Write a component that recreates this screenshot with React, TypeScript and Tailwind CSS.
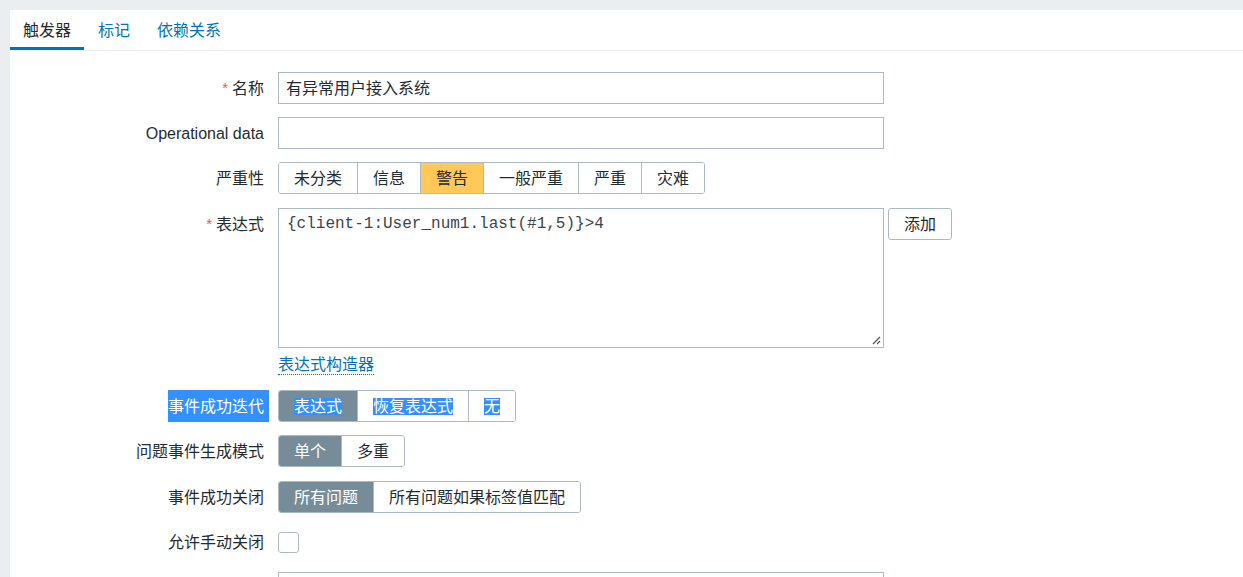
import React from "react";

const FONT = "font-['Liberation_Sans','Noto_Sans_CJK_SC',sans-serif]";

function Label({ children, req }: { children: React.ReactNode; req?: boolean }) {
  return (
    <div className="w-[254px] shrink-0 h-[32px] pt-[2px] flex items-center justify-end text-[#1f2c33]">
      {req && <span className="text-[#e45959] mr-[4px] text-[15px] leading-[16px] -mt-[2px]">*</span>}
      {children}
    </div>
  );
}

function Seg({ items, sel, warn, hl }: { items: string[]; sel?: number; warn?: number; hl?: boolean }) {
  return (
    <div className="flex h-[32px] border border-[#acbbc2] rounded-[3px] overflow-hidden">
      {items.map((t, i) => {
        const selected = i === sel;
        const isWarn = i === warn;
        return (
          <div
            key={t}
            className={`px-[15px] pt-[1px] flex items-center leading-[20px] ${i > 0 ? "border-l border-[#acbbc2]" : ""} ${
              selected ? "bg-[#768d99] text-white" : isWarn ? "bg-[#ffc859] text-[#1f2c33]" : "bg-white text-[#1f2c33]"
            }`}
          >
            {hl ? <span className="bg-[#3390ff] text-white leading-[17px]">{t}</span> : t}
          </div>
        );
      })}
    </div>
  );
}

export default function App() {
  return (
    <div className={`min-h-screen w-full bg-[#ebeef0] pl-[10px] pt-[10px] text-[16px] ${FONT}`}>
      <div className="bg-white min-h-[567px]">
        <div className="flex h-[41px] border-b border-[#ebeef0]">
          <div className="px-[13px] h-[40px] flex items-center pt-[5px] border-b-[3px] border-[#0275b8] text-[#1f2c33]">触发器</div>
          <div className="pl-[14px] pr-[13px] h-[40px] flex items-center pt-[2px] text-[#0275b8]">标记</div>
          <div className="px-[14px] h-[40px] flex items-center pt-[2px] text-[#0275b8]">依赖关系</div>
        </div>

        <div className="pt-[21px] flex flex-col">
          <div className="flex items-center">
            <Label req>名称</Label>
            <div className="ml-[14px] w-[606px] h-[32px] border border-[#acbbc2] flex items-center pl-[7px] pt-[2px] text-[#1f2c33]">
              有异常用户接入系统
            </div>
          </div>

          <div className="flex items-center mt-[13px]">
            <Label>Operational data</Label>
            <div className="ml-[14px] w-[606px] h-[32px] border border-[#acbbc2]" />
          </div>

          <div className="flex items-center mt-[13px]">
            <Label>严重性</Label>
            <div className="ml-[14px]">
              <Seg items={["未分类", "信息", "警告", "一般严重", "严重", "灾难"]} warn={2} />
            </div>
          </div>

          <div className="flex items-start mt-[14px]">
            <Label req>表达式</Label>
            <div className="ml-[14px] flex flex-col">
              <div className="relative w-[606px] h-[140px] border border-[#acbbc2] pl-[8px] pt-[5px] font-['Liberation_Mono',monospace] text-[16px] leading-[20px] text-[#3a464d] whitespace-pre">
                {"{client-1:User_num1.last(#1,5)}>4"}
                <svg className="absolute right-[2px] bottom-[2px]" width="11" height="11" viewBox="0 0 11 11">
                  <path d="M10 3 L3 10 M10 7 L7 10" stroke="#555" strokeWidth="1.2" />
                </svg>
              </div>
              <div className="flex h-[42px] pt-[7px] items-start">
                <div className="text-[#0275b8] h-[20px] leading-[20px] border-b border-dotted border-[#0275b8]">表达式构造器</div>
              </div>
            </div>
            <div className="ml-[4px] h-[32px] px-[15px] pt-[1px] border border-[#acbbc2] rounded-[3px] flex items-center text-[#1f2c33] bg-white">
              添加
            </div>
          </div>

          <div className="flex items-center">
            <div className="w-[254px] shrink-0 h-[32px] flex items-center justify-end">
              <span className="bg-[#3390ff] text-white h-[32px] pt-[2px] flex items-center pr-[5px] -mr-[5px]">事件成功迭代</span>
            </div>
            <div className="ml-[14px]">
              <Seg items={["表达式", "恢复表达式", "无"]} sel={0} hl />
            </div>
          </div>

          <div className="flex items-center mt-[13px]">
            <Label>问题事件生成模式</Label>
            <div className="ml-[14px]">
              <Seg items={["单个", "多重"]} sel={0} />
            </div>
          </div>

          <div className="flex items-center mt-[14px]">
            <Label>事件成功关闭</Label>
            <div className="ml-[14px]">
              <Seg items={["所有问题", "所有问题如果标签值匹配"]} sel={0} />
            </div>
          </div>

          <div className="flex items-center mt-[13px]">
            <Label>允许手动关闭</Label>
            <div className="ml-[14px] w-[21px] h-[21px] border border-[#acbbc2] rounded-[3px] bg-white" />
          </div>

          <div className="flex items-center mt-[14px]">
            <div className="w-[254px] shrink-0" />
            <div className="ml-[14px] w-[606px] h-[32px] border border-[#acbbc2]" />
          </div>
        </div>
      </div>
    </div>
  );
}
